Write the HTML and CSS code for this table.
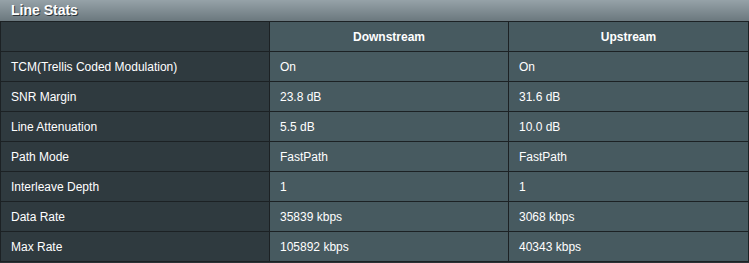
FILE: index.html
```html
<!DOCTYPE html>
<html>
<head>
<meta charset="utf-8">
<link rel="stylesheet" href="styles.css">
</head>
<body>
<div class="panel">
  <div class="title">Line Stats</div>
  <table class="stats">
    <colgroup><col class="c1"><col class="c2"><col class="c3"></colgroup>
    <tr><th class="label"></th><th>Downstream</th><th>Upstream</th></tr>
    <tr><td class="label">TCM(Trellis Coded Modulation)</td><td>On</td><td>On</td></tr>
    <tr><td class="label">SNR Margin</td><td>23.8 dB</td><td>31.6 dB</td></tr>
    <tr><td class="label">Line Attenuation</td><td>5.5 dB</td><td>10.0 dB</td></tr>
    <tr><td class="label">Path Mode</td><td>FastPath</td><td>FastPath</td></tr>
    <tr><td class="label">Interleave Depth</td><td>1</td><td>1</td></tr>
    <tr><td class="label">Data Rate</td><td>35839 kbps</td><td>3068 kbps</td></tr>
    <tr><td class="label">Max Rate</td><td>105892 kbps</td><td>40343 kbps</td></tr>
  </table>
</div>
</body>
</html>
```
FILE: styles.css
```css
html, body {
  margin: 0;
  padding: 0;
  background: #2b3337;
}
.panel {
  width: 749px;
  font-family: "Liberation Sans", Arial, sans-serif;
  color: #ffffff;
}
.title {
  height: 21px;
  line-height: 21px;
  padding-left: 11px;
  font-size: 14px;
  font-weight: bold;
  background: linear-gradient(to bottom, #96a2a8, #6b787e);
  text-shadow: 1px 1px 0 #2c3438;
}
.stats {
  width: 749px;
  border-collapse: collapse;
  table-layout: fixed;
  font-size: 12px;
}
.c1 { width: 269px; }
.c2 { width: 239px; }
.c3 { width: 240px; }
.stats td, .stats th {
  height: 29px;
  padding: 0 0 0 10px;
  border: 1px solid #1c2124;
  background: #475a60;
  text-align: left;
  vertical-align: middle;
}
.stats th {
  font-weight: bold;
  text-align: center;
  padding: 0;
}
.stats .label {
  background: #2f3a3f;
}
```
